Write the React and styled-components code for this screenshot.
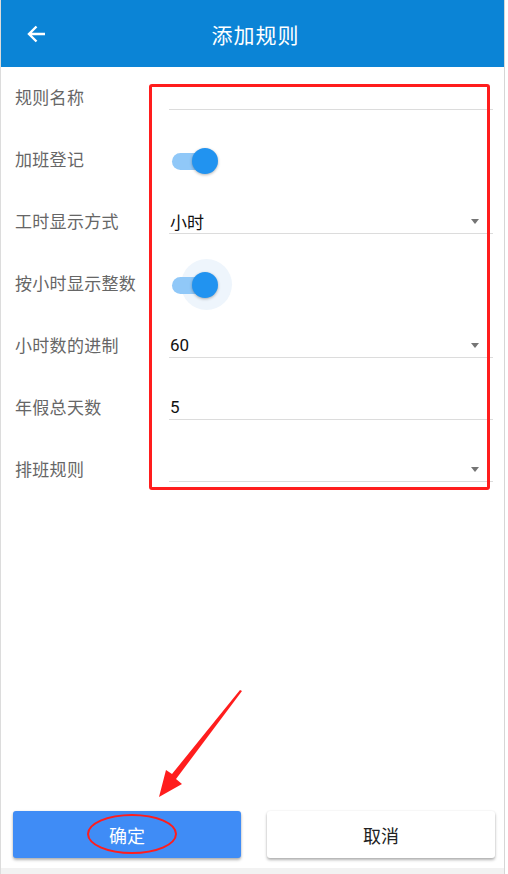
import React from "react";
import styled, { createGlobalStyle } from "styled-components";

const Global = createGlobalStyle`
  html, body {
    margin: 0;
    padding: 0;
    background: #ffffff;
  }
  body {
    font-family: Roboto, "Noto Sans CJK SC", sans-serif;
  }
`;

const Page = styled.div`
  position: relative;
  width: 505px;
  height: 874px;
  display: flex;
  flex-direction: column;
  border-right: 1px solid #d6d6d6;
  border-left: 1px solid #dcdcdc;
  box-sizing: border-box;
  background: #ffffff;
  overflow: hidden;
`;

const Header = styled.div`
  height: 67px;
  background: #0b84d6;
  display: flex;
  align-items: center;
  position: relative;
  flex-shrink: 0;

  h1 {
    flex: 1;
    margin: 0;
    text-align: center;
    color: #ffffff;
    font-size: 21px;
    font-weight: 400;
    letter-spacing: 1px;
    padding-left: 6px;
  }
`;

const BackBtn = styled.div`
  position: absolute;
  left: 24px;
  top: 22px;
  width: 24px;
  height: 24px;
`;

const Form = styled.div`
  position: relative;
  display: flex;
  flex-direction: column;
`;

const Row = styled.div`
  height: 62px;
  display: grid;
  grid-template-columns: 154px 1fr;
  align-items: center;
  padding: 0 11px 0 14px;

  label {
    color: #666666;
    font-size: 17px;
    letter-spacing: 0.3px;
    margin-top: -3px;
  }
`;

const Field = styled.div`
  position: relative;
  height: 23px;
  border-bottom: 1px solid #dcdcdc;
  margin-top: -1px;
  display: flex;
  align-items: center;
  padding-left: 1px;
  font-size: 17px;
  color: #111111;
`;

const Caret = styled.span`
  position: absolute;
  right: 14px;
  top: 9px;
  width: 0;
  height: 0;
  border-left: 4px solid transparent;
  border-right: 4px solid transparent;
  border-top: 5px solid #757575;
`;

const SwitchWrap = styled.div`
  position: relative;
  width: 48px;
  height: 26px;
  margin-left: 2px;
  margin-top: 2px;
`;

const Track = styled.div`
  position: absolute;
  left: 1px;
  top: 5px;
  width: 42px;
  height: 17px;
  border-radius: 9px;
  background: #90c8f8;
`;

const Halo = styled.div`
  position: absolute;
  left: 10px;
  top: -13px;
  width: 51px;
  height: 51px;
  border-radius: 50%;
  background: #eef5fc;
`;

const Thumb = styled.div`
  position: absolute;
  left: 21px;
  top: 0;
  width: 26px;
  height: 26px;
  border-radius: 50%;
  background: #2193f0;
  box-shadow: 0 1px 3px rgba(0, 0, 0, 0.3);
`;

const Spacer = styled.div`
  flex: 1;
`;

const Buttons = styled.div`
  display: flex;
  gap: 26px;
  padding: 0 9px 10px 12px;
`;

const Btn = styled.button`
  position: relative;
  flex: 1;
  height: 47px;
  border: none;
  border-radius: 3px;
  font-family: inherit;
  font-size: 18px;
  background: ${(p) => (p.$primary ? "#3f8cf6" : "#ffffff")};
  color: ${(p) => (p.$primary ? "#ffffff" : "#222222")};
  box-shadow: 0 2px 3px rgba(0, 0, 0, 0.3), 0 0 2px rgba(0, 0, 0, 0.08);
`;

const Ellipse = styled.span`
  position: absolute;
  left: 74px;
  top: 3px;
  width: 90px;
  height: 40px;
  border: 2px solid #ff1d1d;
  border-radius: 50%;
  box-sizing: border-box;
`;

const Footer = styled.div`
  height: 6px;
  background: #f2f2f2;
`;

const Mark = styled.div`
  position: absolute;
  left: 148px;
  top: 17px;
  width: 341px;
  height: 406px;
  border: 3px solid #ff1d1d;
  border-radius: 3px;
  box-sizing: border-box;
  pointer-events: none;
`;

const Arrow = styled.svg`
  position: absolute;
  left: 150px;
  top: 685px;
  pointer-events: none;
`;

const Toggle = ({ focused }) => (
  <SwitchWrap>
    {focused && <Halo />}
    <Track />
    <Thumb />
  </SwitchWrap>
);

const App = () => {
  return (
    <Page>
      <Global />
      <Header>
        <BackBtn>
          <svg width="24" height="24" viewBox="0 0 24 24">
            <path
              d="M20 12H4.5M11.5 4.5L4 12l7.5 7.5"
              fill="none"
              stroke="#ffffff"
              strokeWidth="2.4"
            />
          </svg>
        </BackBtn>
        <h1>添加规则</h1>
      </Header>
      <Form>
        <Row>
          <label>规则名称</label>
          <Field />
        </Row>
        <Row>
          <label>加班登记</label>
          <Toggle />
        </Row>
        <Row>
          <label>工时显示方式</label>
          <Field>
            小时
            <Caret />
          </Field>
        </Row>
        <Row>
          <label>按小时显示整数</label>
          <Toggle focused />
        </Row>
        <Row>
          <label>小时数的进制</label>
          <Field>
            60
            <Caret />
          </Field>
        </Row>
        <Row>
          <label>年假总天数</label>
          <Field>5</Field>
        </Row>
        <Row>
          <label>排班规则</label>
          <Field>
            <Caret />
          </Field>
        </Row>
        <Mark />
      </Form>
      <Spacer />
      <Buttons>
        <Btn $primary>
          确定
          <Ellipse />
        </Btn>
        <Btn>取消</Btn>
      </Buttons>
      <Footer />
      <Arrow width="100" height="120" viewBox="0 0 100 120">
        <polygon points="91,6 89,5 21,89 15,85 8,112 31,99 25,94" fill="#ff1d1d" />
      </Arrow>
    </Page>
  );
};

export default App;
